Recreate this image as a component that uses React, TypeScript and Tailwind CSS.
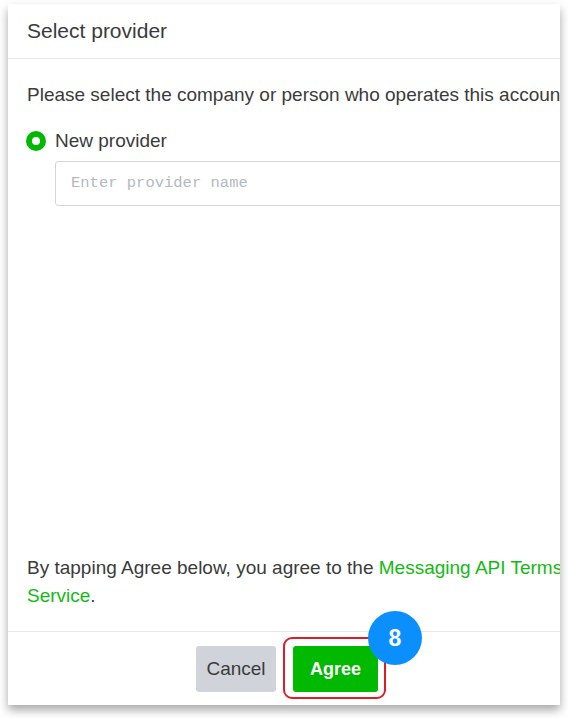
export default function App() {
  return (
    <div className="min-h-[718px] w-[568px] bg-white pt-[4px] pl-[8px]" style={{ fontFamily: '"Liberation Sans", Arial, sans-serif' }}>
      <div className="relative flex h-[701px] w-[552px] flex-col bg-white shadow-[0_5px_9px_rgba(0,0,0,0.35)]">
        {/* Header */}
        <div className="flex h-[55px] shrink-0 items-center border-b border-[#e6e7ea] px-[19px] text-[21px] text-[#3b3b3b]">
          Select provider
        </div>

        {/* Body */}
        <div className="flex flex-1 flex-col overflow-hidden pt-[24px] pb-[21px] pl-[19px]">
          <p className="whitespace-nowrap text-[19px] leading-[24px] text-[#3b3b3b]">
            Please select the company or person who operates this account.
          </p>

          <label className="mt-[22px] flex items-center gap-[9px] -ml-px">
            <span className="h-[20px] w-[20px] rounded-full border-[6px] border-[#00b900] bg-white" />
            <span className="text-[19px] leading-[24px] text-[#3b3b3b]">New provider</span>
          </label>

          <div className="mt-[8px] ml-[28px] flex h-[45px] w-[560px] shrink-0 items-center rounded-[3px] border border-[#d3d6dc] px-[15px]">
            <span className="text-[15.5px] text-[#b4b8bf]" style={{ fontFamily: '"Liberation Mono", monospace' }}>
              Enter provider name
            </span>
          </div>

          <p className="mt-auto whitespace-nowrap text-[19px] leading-[28px] text-[#3b3b3b]">
            By tapping Agree below, you agree to the{' '}
            <a className="text-[#14b914]">
              Messaging API Terms of
              <br />
              Service
            </a>
            .
          </p>
        </div>

        {/* Footer */}
        <div className="flex h-[74px] shrink-0 items-start justify-center gap-[17px] border-t border-[#e6e7ea] pt-[14px] pl-[6px]">
          <button className="h-[46px] w-[80px] rounded-[3px] bg-[#d0d4da] text-[19px] text-[#3b3b3b]">Cancel</button>
          <button className="h-[46px] w-[85px] rounded-[3px] bg-[#00b900] text-[18px] font-bold text-white">Agree</button>
        </div>

        {/* annotation */}
        <div className="pointer-events-none absolute left-[275px] top-[633px] h-[62px] w-[103px] rounded-[9px] border-2 border-[#dc1f26]" />
        <div className="absolute left-[360px] top-[607px] flex h-[54px] w-[54px] items-center justify-center rounded-full bg-[#0b8ffd] text-[23px] font-bold text-white">
          8
        </div>
      </div>
    </div>
  )
}
